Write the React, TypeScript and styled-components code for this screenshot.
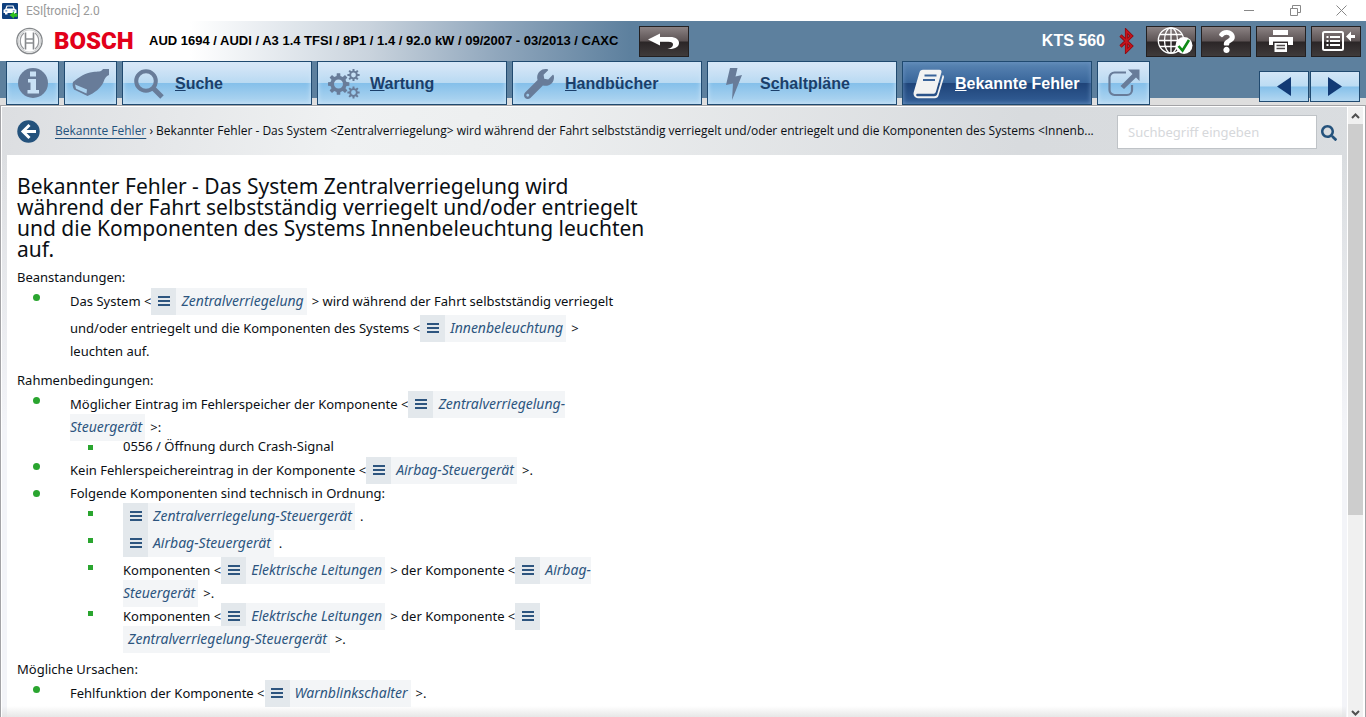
import React from "react";
import styled, { createGlobalStyle, css } from "styled-components";
import { FaWrench, FaSearch, FaQuestion } from "react-icons/fa";

const sans = `"Noto Sans", "Open Sans", sans-serif`;
const arial = `"Liberation Sans", Arial, sans-serif`;

const GlobalStyle = createGlobalStyle`
  * { box-sizing: border-box; }
  body { margin: 0; background: #fff; font-family: ${sans}; color: #0b0f14; }
  button { padding: 0; font: inherit; cursor: pointer; }
  svg { display: block; flex: none; }
`;

const Window = styled.div`
  display: flex;
  flex-direction: column;
  min-height: 100vh;
  overflow: hidden;
`;

const TitleBar = styled.div`
  display: flex;
  align-items: center;
  height: 21px;
  padding: 0 19px 0 2px;
  background: #fff;
`;

const WindowTitle = styled.span`
  flex: 1;
  margin-left: 8px;
  font-family: Roboto, sans-serif;
  font-size: 12px;
  line-height: 18px;
  color: #999;
`;

const WindowButtons = styled.div`
  display: flex;
  gap: 34px;
`;

const WindowButton = styled.button`
  display: flex;
  width: 12px;
  height: 18px;
  align-items: center;
  justify-content: center;
  border: 0;
  background: none;
`;

const Header = styled.header`
  display: flex;
  align-items: center;
  height: 40px;
  padding: 0 5px 0 15px;
  background: linear-gradient(90deg, #fff 190px, #c9d3dd 370px, #8fa6bc 500px, #5d809e 630px);
`;

const Brand = styled.span`
  margin-left: 10px;
  width: 95px;
  font-family: Roboto, sans-serif;
  font-weight: 900;
  font-size: 24px;
  line-height: 28px;
  color: #e2001a;
`;

const Vehicle = styled.span`
  min-width: 475px;
  margin-right: 15px;
  font: bold 13px/18px ${arial};
  color: #000;
  white-space: nowrap;
`;

const Device = styled.span`
  margin-left: auto;
  margin-right: 14px;
  font: bold 16px/20px ${arial};
  color: #fff;
  white-space: nowrap;
`;

const Tools = styled.div`
  display: flex;
  gap: 5px;
  margin-left: 12px;
`;

const ToolButton = styled.button`
  display: flex;
  align-items: center;
  justify-content: center;
  width: 50px;
  height: 31px;
  border: 1px solid #232021;
  background: linear-gradient(#8b8283, #5c5354 48%, #2b2627 52%, #3f3b3b);
  color: #fff;
`;

const TabBar = styled.nav`
  display: flex;
  gap: 5px;
  height: 44px;
  padding: 0 6px;
  background: linear-gradient(#5d809e 37px, #dedede 37px);
`;

const Tab = styled.button<{ $active?: boolean; $iconOnly?: boolean }>`
  display: flex;
  align-items: center;
  flex: 0 1 ${(p) => (p.$iconOnly ? "53px" : "190px")};
  height: 44px;
  padding-top: ${(p) => (p.$iconOnly ? "0" : "2px")};
  border: 1px solid #204a70;
  font: bold 16px/20px ${arial};
  white-space: nowrap;
  ${(p) =>
    p.$active
      ? css`
          color: #fff;
          background: linear-gradient(#5b86b4, #39669b 49%, #1f4479 51%, #335e96);
          box-shadow: inset 0 0 5px #6b93c0;
        `
      : css`
          color: #1b3f6a;
          background: linear-gradient(#dbe8f8, #b9daf2 49%, #85c0ea 51%, #b3d7f1);
          box-shadow: inset 0 0 5px #cfe6f8;
        `}
`;

const TabIcon = styled.span<{ $wide?: boolean }>`
  display: flex;
  width: ${(p) => (p.$wide ? "52px" : "51px")};
  justify-content: center;
  color: #687c99;
`;

const Pager = styled.div`
  display: flex;
  gap: 1px;
  margin: 10px 0 0 auto;
`;

const PagerButton = styled.button`
  display: flex;
  align-items: center;
  justify-content: center;
  width: 50px;
  height: 31px;
  border: 1px solid #204a70;
  background: linear-gradient(#d3e6f7, #bcdcf3 49%, #85c0ea 51%, #b3d7f1);
`;

const Panel = styled.main`
  position: relative;
  display: flex;
  flex: 1;
  border: 1px solid #a3a3a6;
  border-width: 1px 1px 0 1px;
  padding: 1px 1px 0 1px;
  background: #fff;
`;

const Page = styled.div`
  display: flex;
  flex-direction: column;
  flex: 1;
  min-width: 0;
  padding: 0 5px;
  background: linear-gradient(rgba(243, 244, 248, 0) 48px, #f3f4f8 320px),
    linear-gradient(97deg, #dcdee1, #eff1f2 24%, #eceeef 38%, #d8dbde 72%, #dadde0);
`;

const CrumbBar = styled.div`
  display: flex;
  align-items: center;
  height: 48px;
  padding: 0 5px 0 10px;
`;

const RoundButton = styled.button`
  display: flex;
  border: 0;
  background: none;
`;

const Crumbs = styled.div`
  flex: 1;
  min-width: 0;
  margin: 0 8px 0 15px;
  overflow: hidden;
  font-family: "Open Sans", sans-serif;
  font-size: 12px;
  line-height: 20px;
  white-space: nowrap;
`;

const CrumbLink = styled.a`
  color: #24527c;
  text-decoration: underline;
  text-underline-offset: 3px;
`;

const SearchInput = styled.input`
  width: 200px;
  height: 34px;
  margin-top: 2px;
  padding: 0 10px;
  border: 1px solid #bfc3c7;
  background: #fff;
  font: 13px/19px ${sans};
  &::placeholder {
    color: #d6d8db;
    opacity: 1;
  }
`;

const SearchButton = styled(RoundButton)`
  margin: 4px 0 0 4px;
  color: #24527c;
`;

const Article = styled.article`
  flex: 1;
  padding: 21px 10px 0;
  background: #fff;
  font-size: 13px;
  line-height: 19px;
  white-space: nowrap;
`;

const Title = styled.h1`
  margin: 0 0 8px;
  font-size: 21px;
  line-height: 21px;
  font-weight: 400;
`;

const Section = styled.section`
  margin-bottom: 10px;
  &:last-child {
    margin-bottom: 0;
  }
`;

const SectionTitle = styled.h2`
  margin: 0 0 1px;
  font: inherit;
`;

const List = styled.ul<{ $nested?: boolean }>`
  margin: 0 0 ${(p) => (p.$nested ? "1px" : "0")};
  padding: 0;
  list-style: none;
  & > li::before {
    content: "";
    background: #2aa52f;
    ${(p) =>
      p.$nested
        ? css`
            width: 5px;
            height: 5px;
            margin: 8px 0 0 18px;
          `
        : css`
            width: 7px;
            height: 7px;
            margin: 6px 0 0 16px;
            border-radius: 50%;
          `}
  }
`;

const Item = styled.li`
  display: grid;
  grid-template-columns: 53px 1fr;
`;

const RefLink = styled.a`
  color: #2d557f;
  text-decoration: none;
`;

const RefIcon = styled.span`
  display: inline-flex;
  align-items: flex-start;
  justify-content: center;
  width: 25px;
  height: 27px;
  padding-top: 8px;
  background: #e3e8ec;
`;

const RefText = styled.span`
  padding: 3px 3px 5px 5px;
  margin-right: 5px;
  font-size: 14px;
  line-height: 15px;
  font-style: italic;
  background: #f3f5f7;
`;

const ScrollBar = styled.div`
  display: flex;
  flex-direction: column;
  width: 17px;
  padding: 0 1px;
  background: #fff;
`;

const ScrollButton = styled.button<{ $end?: boolean }>`
  display: flex;
  align-items: center;
  justify-content: center;
  height: ${(p) => (p.$end ? "9px" : "17px")};
  border: 0;
  background: #f0f0f0;
`;

const ScrollTrack = styled.div`
  flex: 1;
  background: #f0f0f0;
`;

const ScrollThumb = styled.div`
  height: 67%;
  background: #cdcdcd;
`;

const BottomFade = styled.div`
  position: absolute;
  left: 1px;
  right: 19px;
  bottom: 0;
  height: 11px;
  background: linear-gradient(rgba(225, 225, 225, 0), rgba(225, 225, 225, 0.8));
  pointer-events: none;
`;

function gear(cx: number, cy: number, outer: number, inner: number, teeth: number, hole: number) {
  const step = (Math.PI * 2) / teeth;
  const points: string[] = [];
  for (let i = 0; i < teeth; i++) {
    const a = i * step;
    const corners: [number, number][] = [
      [inner, -0.3],
      [outer, -0.2],
      [outer, 0.2],
      [inner, 0.3],
    ];
    corners.forEach(([r, k]) => {
      points.push(`${(cx + r * Math.cos(a + k * step)).toFixed(2)} ${(cy + r * Math.sin(a + k * step)).toFixed(2)}`);
    });
  }
  return `M${points.join("L")}ZM${cx - hole} ${cy}a${hole} ${hole} 0 1 0 ${hole * 2} 0a${hole} ${hole} 0 1 0 ${-hole * 2} 0Z`;
}

const AppIcon = () => (
  <svg width="16" height="16" viewBox="0 0 16 16">
    <rect width="16" height="16" rx="1" fill="#0d3f7e" />
    <path d="M1.500 6.800 3.200 6 4.600 2.500h6.800L12.800 6l1.700.8V10H13v1.500h-2.500V10h-5v1.500H3V10H1.500Z" fill="#fff" />
    <path d="M4.600 5.600 5.500 3.600h5l.9 2Z" fill="#0d3f7e" />
    <path d="M3.300 7.300h2v1.300h-2zM10.700 7.300h2v1.300h-2z" fill="#5d8dc4" />
    <path d="M7.500 12 12 8.500v2h3.500v3.300H12v2Z" fill="#2fc020" />
  </svg>
);

const Anchor = () => (
  <svg width="29" height="28" viewBox="0 0 29 28" fill="none">
    <circle cx="14.5" cy="14" r="12.6" stroke="#85888b" strokeWidth="1.4" />
    <circle cx="14.5" cy="14" r="11.2" stroke="#d3d5d6" strokeWidth="1.2" />
    <path d="M10.500 5.500v17M18.500 5.500v17" stroke="#85888b" strokeWidth="1.6" />
    <path d="M10.500 12h8M10.500 16h8" stroke="#8d9093" strokeWidth="1.3" />
    <path d="M9 6c-5 4-5 12 0 16M20 6c5 4 5 12 0 16" stroke="#9a9c9f" strokeWidth="1.3" />
  </svg>
);

const Undo = () => (
  <svg width="32" height="17" viewBox="0 0 32 17">
    <path d="M0 6.500 12 .5v3.500h10c6 0 9 2.700 9 6 0 3.500-3.500 6-9.500 6h-2c3.800-1 5.500-2.500 5.500-4.500 0-1.800-1.500-2.700-4.500-2.700H12v3.700Z" fill="#fff" />
  </svg>
);

const Bluetooth = () => (
  <svg width="15" height="26" viewBox="0 0 15 26" fill="none" strokeLinejoin="miter">
    <path d="M1.500 7.500 12.500 18 7.500 23V3l5 5L1.500 18.500" stroke="#8a0b12" strokeWidth="3.200" />
    <path d="M1.500 7.500 12.500 18 7.500 23V3l5 5L1.500 18.500" stroke="#c8141c" strokeWidth="1.600" />
  </svg>
);

const GlobeOk = () => (
  <svg width="44" height="28" viewBox="-8 0 44 28" fill="none">
    <g stroke="#fff" strokeWidth="1.300">
      <circle cx="14" cy="13.500" r="12.700" />
      <ellipse cx="14" cy="13.500" rx="6.500" ry="12.700" />
      <path d="M14 1v25M1.300 13.500h25.400M3 7.500h22M3 19.500h22" />
    </g>
    <circle cx="27" cy="18.500" r="8.500" fill="#fff" />
    <path d="m21.500 19 4 4.500L32 13" stroke="#0f8a16" strokeWidth="2.600" />
  </svg>
);

const Printer = () => (
  <svg width="26" height="24" viewBox="0 0 26 24">
    <path d="M5 1h15v5H5zM1 8h24v8h-5v-3.500H5V16H1zM6.500 14h12.500v9H6.500z" fill="#fff" />
    <path d="M8.500 16.500h8.500M8.500 19.500h8.500" stroke="#514b4c" strokeWidth="1.300" />
  </svg>
);

const ListOut = () => (
  <svg width="42" height="22" viewBox="-7 0 42 22" fill="none">
    <rect x="1" y="2" width="20" height="18" rx="1.500" stroke="#fff" strokeWidth="2" />
    <path d="M4.500 7h2M8 7h10M4.500 11h2M8 11h10M4.500 15h2M8 15h10" stroke="#fff" strokeWidth="2" />
    <path d="M24 6.500 29 1.500V5h4v3h-4v3.500Z" fill="#fff" />
  </svg>
);

const Info = () => (
  <svg width="30" height="30" viewBox="0 0 30 30">
    <circle cx="15" cy="15" r="15" fill="currentColor" />
    <path d="M12 3.500h6v5h-6zM10 11h8v11h3v3.500H9.500V22h3v-7.500H10z" fill="#c9e1f5" />
  </svg>
);

const Plug = () => (
  <svg width="38" height="28" viewBox="0 0 38 28">
    <path d="M1 13C7 8 13 4 21 3c5-.5 8 0 10-3h6v6c-3 1-4 3-5.500 7-2.500 6-9 11-16 14L2 20.500C.5 18 .3 15 1 13Z" fill="currentColor" />
    <path d="M3 15.500 15 20.500l-.5 4L4 19.800Z" fill="#a9d2f0" />
  </svg>
);

const Magnifier = () => (
  <svg width="30" height="30" viewBox="0 0 30 30" fill="none" stroke="currentColor">
    <circle cx="12" cy="12" r="9.800" strokeWidth="4" />
    <path d="m19.500 19.500 8.500 8.500" strokeWidth="5" />
  </svg>
);

const Gears = () => (
  <svg width="32" height="30" viewBox="0 0 32 30" fill="currentColor" fillRule="evenodd">
    <path d={gear(10.5, 15, 11, 8.2, 8, 4.5)} />
    <path d={gear(25.5, 6, 6.2, 4.3, 8, 2.4)} />
    <path d={gear(25.5, 23.5, 6.2, 4.3, 8, 2.4)} />
  </svg>
);

const Bolt = () => (
  <svg width="18" height="32" viewBox="0 0 18 32">
    <path d="M5 0h7.500L10.500 8.500 17 7 7 32 8 15.500 1 17Z" fill="currentColor" />
  </svg>
);

const Book = () => (
  <svg width="32" height="30" viewBox="0 0 32 30">
    <path d="M10 .8h16.500c1.600 0 2.300 1.200 1.900 2.700L23 22.500c-.4 1.500-1.500 2.300-3 2.300H4.500c-1.800 0-2 2.500.3 2.500h16.400c1.500 0 2.500-.7 3-2.200L29.700 6c1.200.6 1.500 1.700 1.100 2.900l-5.300 17.600c-.5 1.700-1.800 2.700-3.500 2.700H5C1.800 29.200-.2 26 .8 23L6.300 4C6.900 2 8 .8 10 .8Z" fill="#f2f2f2" />
    <path d="M11.500 6.500h12M10 11h12" stroke="#3b649a" strokeWidth="2.200" />
  </svg>
);

const External = () => (
  <svg width="32" height="28" viewBox="0 0 32 28" fill="none">
    <path d="M18 3.500H6.500a5 5 0 0 0-5 5v12.500a5 5 0 0 0 5 5h12.500a5 5 0 0 0 5-5V16" stroke="currentColor" strokeWidth="2.200" />
    <path d="M20 .5h11.500V12l-3.500-3.500L16 20 12.500 17 24.500 5Z" fill="currentColor" />
  </svg>
);

const BackArrow = () => (
  <svg width="23" height="23" viewBox="0 0 23 23" fill="none">
    <circle cx="11.500" cy="11.500" r="11.200" fill="#24527c" />
    <path d="M19 11.500H6.500M12.500 5l-6.500 6.500 6.500 6.500" stroke="#fff" strokeWidth="3" />
  </svg>
);

const Bars = () => (
  <svg width="12" height="10" viewBox="0 0 12 10">
    <path d="M0 1h12M0 5h12M0 9h12" stroke="#2d557f" strokeWidth="2" />
  </svg>
);

const Chevron = ({ down }: { down?: boolean }) => (
  <svg width="9" height="6" viewBox="0 0 9 6" fill="none">
    <path d={down ? "M1 1l3.500 3.500L8 1" : "M1 5l3.500-3.500L8 5"} stroke="#505050" strokeWidth="2" />
  </svg>
);

function Ref({ children }: { children: React.ReactNode }) {
  return (
    <RefLink href="#">
      <RefIcon>
        <Bars />
      </RefIcon>
      {children}
    </RefLink>
  );
}

export default function App() {
  return (
    <Window>
      <GlobalStyle />
      <TitleBar>
        <AppIcon />
        <WindowTitle>ESI[tronic] 2.0</WindowTitle>
        <WindowButtons>
          <WindowButton aria-label="Minimieren">
            <svg width="10" height="11" stroke="#888"><path d="M0 5.500h10" /></svg>
          </WindowButton>
          <WindowButton aria-label="Wiederherstellen">
            <svg width="11" height="11" fill="none" stroke="#888"><path d="M.5 3.500h7v7h-7zM2.500 3.500v-3h8v7h-3" /></svg>
          </WindowButton>
          <WindowButton aria-label="Schließen">
            <svg width="11" height="11" stroke="#888"><path d="m.5.5 10 10m0-10-10 10" /></svg>
          </WindowButton>
        </WindowButtons>
      </TitleBar>

      <Header>
        <Anchor />
        <Brand>BOSCH</Brand>
        <Vehicle>AUD 1694 / AUDI / A3 1.4 TFSI / 8P1 / 1.4 / 92.0 kW / 09/2007 - 03/2013 / CAXC</Vehicle>
        <ToolButton aria-label="Zurück"><Undo /></ToolButton>
        <Device>KTS 560</Device>
        <Bluetooth />
        <Tools>
          <ToolButton aria-label="Online-Status"><GlobeOk /></ToolButton>
          <ToolButton aria-label="Hilfe"><FaQuestion size={23} /></ToolButton>
          <ToolButton aria-label="Drucken"><Printer /></ToolButton>
          <ToolButton aria-label="Menü"><ListOut /></ToolButton>
        </Tools>
      </Header>

      <TabBar>
        <Tab $iconOnly aria-label="Information"><TabIcon><Info /></TabIcon></Tab>
        <Tab $iconOnly aria-label="Diagnosestecker"><TabIcon><Plug /></TabIcon></Tab>
        <Tab><TabIcon $wide><Magnifier /></TabIcon><span><u>S</u>uche</span></Tab>
        <Tab><TabIcon $wide><Gears /></TabIcon><span><u>W</u>artung</span></Tab>
        <Tab><TabIcon $wide><FaWrench size={30} /></TabIcon><span><u>H</u>andbücher</span></Tab>
        <Tab><TabIcon $wide><Bolt /></TabIcon><span>S<u>c</u>haltpläne</span></Tab>
        <Tab $active><TabIcon $wide><Book /></TabIcon><span><u>B</u>ekannte Fehler</span></Tab>
        <Tab $iconOnly aria-label="Extern öffnen"><TabIcon><External /></TabIcon></Tab>
        <Pager>
          <PagerButton aria-label="Vorherige"><svg width="14" height="19"><path d="M14 0v19L0 9.500Z" fill="#123a75" /></svg></PagerButton>
          <PagerButton aria-label="Nächste"><svg width="14" height="19"><path d="M0 0v19l14-9.500Z" fill="#123a75" /></svg></PagerButton>
        </Pager>
      </TabBar>

      <Panel>
        <Page>
          <CrumbBar>
            <RoundButton aria-label="Zurück zur Übersicht"><BackArrow /></RoundButton>
            <Crumbs>
              <CrumbLink href="#">Bekannte Fehler</CrumbLink> › Bekannter Fehler - Das System &lt;Zentralverriegelung&gt; wird während der Fahrt selbstständig verriegelt und/oder entriegelt und die Komponenten des Systems &lt;Innenb...
            </Crumbs>
            <SearchInput aria-label="Suchbegriff" placeholder="Suchbegriff eingeben" />
            <SearchButton aria-label="Suchen"><FaSearch size={16} /></SearchButton>
          </CrumbBar>

          <Article>
            <Title>
              Bekannter Fehler - Das System Zentralverriegelung wird<br />
              während der Fahrt selbstständig verriegelt und/oder entriegelt<br />
              und die Komponenten des Systems Innenbeleuchtung leuchten<br />
              auf.
            </Title>

            <Section>
              <SectionTitle>Beanstandungen:</SectionTitle>
              <List>
                <Item>
                  <div>
                    Das System &lt;<Ref><RefText>Zentralverriegelung</RefText></Ref>&gt; wird während der Fahrt selbstständig verriegelt<br />
                    und/oder entriegelt und die Komponenten des Systems &lt;<Ref><RefText>Innenbeleuchtung</RefText></Ref>&gt;<br />
                    leuchten auf.
                  </div>
                </Item>
              </List>
            </Section>

            <Section>
              <SectionTitle>Rahmenbedingungen:</SectionTitle>
              <List>
                <Item>
                  <div>
                    Möglicher Eintrag im Fehlerspeicher der Komponente &lt;<Ref><RefText>Zentralverriegelung-<br />Steuergerät</RefText></Ref>&gt;:
                    <List $nested>
                      <Item><div>0556 / Öffnung durch Crash-Signal</div></Item>
                    </List>
                  </div>
                </Item>
                <Item>
                  <div>Kein Fehlerspeichereintrag in der Komponente &lt;<Ref><RefText>Airbag-Steuergerät</RefText></Ref>&gt;.</div>
                </Item>
                <Item>
                  <div>
                    Folgende Komponenten sind technisch in Ordnung:
                    <List $nested>
                      <Item><div><Ref><RefText>Zentralverriegelung-Steuergerät</RefText></Ref>.</div></Item>
                      <Item><div><Ref><RefText>Airbag-Steuergerät</RefText></Ref>.</div></Item>
                      <Item>
                        <div>
                          Komponenten &lt;<Ref><RefText>Elektrische Leitungen</RefText></Ref>&gt; der Komponente &lt;<Ref><RefText>Airbag-<br />Steuergerät</RefText></Ref>&gt;.
                        </div>
                      </Item>
                      <Item>
                        <div>
                          Komponenten &lt;<Ref><RefText>Elektrische Leitungen</RefText></Ref>&gt; der Komponente &lt;<Ref><br /><RefText>Zentralverriegelung-Steuergerät</RefText></Ref>&gt;.
                        </div>
                      </Item>
                    </List>
                  </div>
                </Item>
              </List>
            </Section>

            <Section>
              <SectionTitle>Mögliche Ursachen:</SectionTitle>
              <List>
                <Item>
                  <div>Fehlfunktion der Komponente &lt;<Ref><RefText>Warnblinkschalter</RefText></Ref>&gt;.</div>
                </Item>
              </List>
            </Section>
          </Article>
        </Page>
        <ScrollBar>
          <ScrollButton aria-label="Nach oben"><Chevron /></ScrollButton>
          <ScrollTrack><ScrollThumb /></ScrollTrack>
          <ScrollButton $end aria-label="Nach unten"><Chevron down /></ScrollButton>
        </ScrollBar>
        <BottomFade />
      </Panel>
    </Window>
  );
}
